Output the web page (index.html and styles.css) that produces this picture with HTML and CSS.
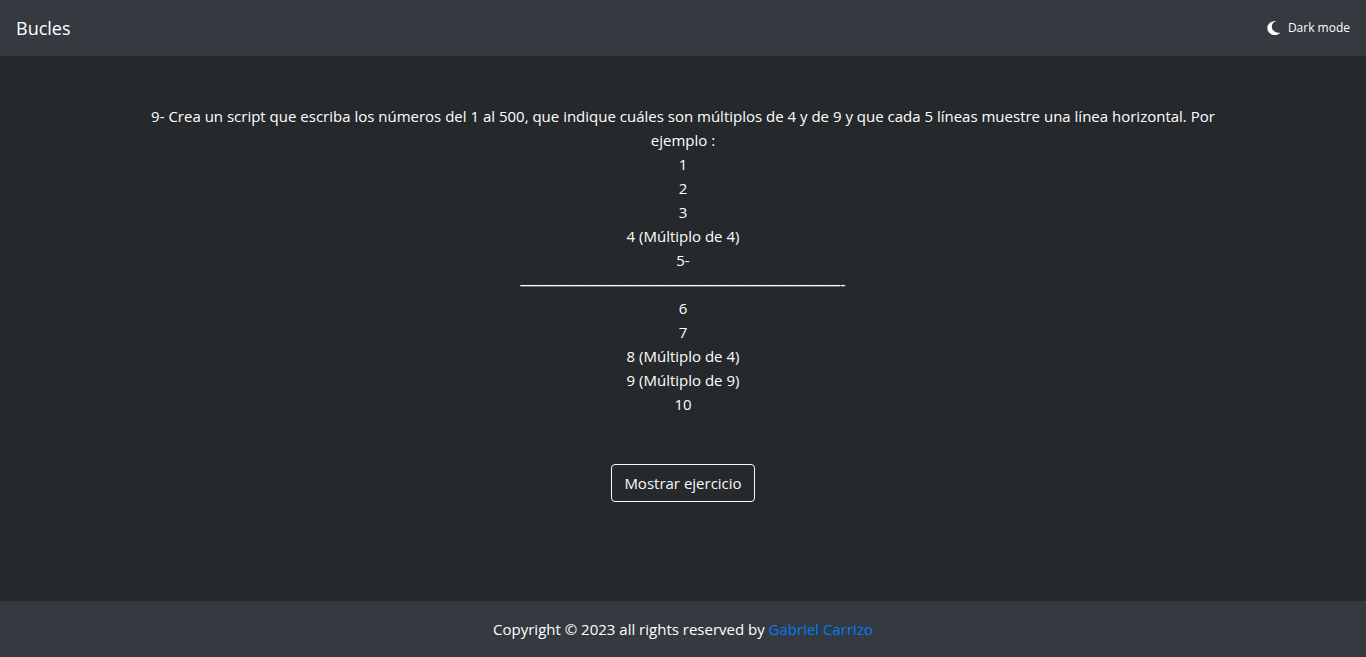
FILE: index.html
```html
<!DOCTYPE html>
<html lang="es">
<head>
<meta charset="utf-8">
<meta name="viewport" content="width=device-width, initial-scale=1">
<title>Bucles</title>
<link rel="stylesheet" href="styles.css">
</head>
<body>
<header class="navbar">
  <a class="brand" href="#">Bucles</a>
  <button class="mode" type="button">
    <svg class="moon" viewBox="0 0 14 14" aria-hidden="true"><path d="M9.300 0C4 0 .3 2.700.3 7s3.500 7 7.700 7c2 0 3.900-.8 5.200-2.300-4.500.4-8.400-2.200-8.400-6C4.800 3.200 6.200 1.200 9.300 0z"/></svg>
    <span>Dark mode</span>
  </button>
</header>
<main class="content">
  <p class="statement">9- Crea un script que escriba los números del 1 al 500, que indique cuáles son múltiplos de 4 y de 9 y que cada 5 líneas muestre una línea horizontal. Por ejemplo :<br>1<br>2<br>3<br>4 (Múltiplo de 4)<br>5-<br><span class="rule">————————————————————-</span><br>6<br>7<br>8 (Múltiplo de 4)<br>9 (Múltiplo de 9)<br>10</p>
  <button class="show" type="button">Mostrar ejercicio</button>
</main>
<footer class="footer">
  <p class="copyright">Copyright © 2023 all rights reserved by <a class="author" href="#">Gabriel Carrizo</a></p>
</footer>
</body>
</html>
```
FILE: styles.css
```css
* { box-sizing: border-box; }
body {
  margin: 0;
  min-height: 100vh;
  display: flex;
  flex-direction: column;
  background: #25292c;
  color: #fff;
  font: 15px/24px "Open Sans", "Noto Sans", sans-serif;
}
.navbar {
  display: flex;
  align-items: center;
  justify-content: space-between;
  height: 56px;
  padding: 0 16px;
  background: #343a40;
}
.brand { color: #fff; font-size: 18px; line-height: 30px; text-decoration: none; }
.mode {
  display: flex;
  align-items: center;
  gap: 7px;
  padding: 0;
  border: 0;
  background: none;
  color: #fff;
  font: inherit;
  font-size: 12px;
  line-height: 20px;
}
.moon { width: 14px; height: 14px; fill: currentColor; }
.content {
  flex: 1;
  width: 100%;
  max-width: 1140px;
  margin: 0 auto;
  padding: 48px 15px;
  display: flex;
  flex-direction: column;
  align-items: center;
  gap: 48px;
}
.statement { margin: 0; text-align: center; }
.rule { font-family: "Liberation Sans", sans-serif; font-size: 16px; line-height: 20px; }
.show {
  padding: 6px 12px;
  border: 1px solid #f8f9fa;
  border-radius: 4px;
  background: none;
  color: #f8f9fa;
  font: inherit;
}
.footer { padding: 16px; background: #343a40; text-align: center; }
.copyright { margin: 0; }
.author { color: #007bff; text-decoration: none; }
```
